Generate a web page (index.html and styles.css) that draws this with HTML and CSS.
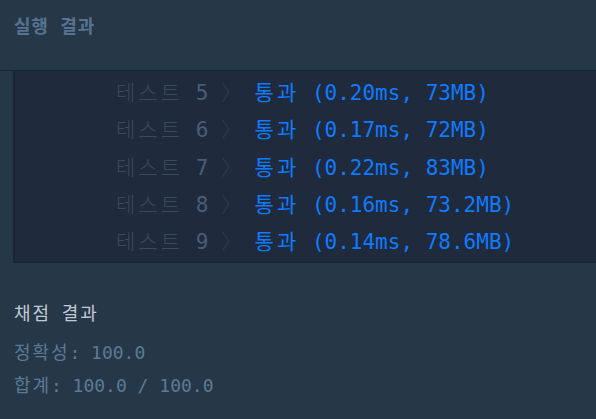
FILE: index.html
```html
<!DOCTYPE html>
<html lang="ko">
<head>
<meta charset="utf-8">
<link rel="stylesheet" href="styles.css">
</head>
<body>
<div class="header"><h2 class="title">실행 결과</h2></div>
<div class="console">
  <div class="row"><span class="label ko">테스트</span> <span class="num">5</span> <span class="arrow">〉</span> <span class="pass"><span class="ko">통과</span> (0.20ms, 73MB)</span></div>
  <div class="row"><span class="label ko">테스트</span> <span class="num">6</span> <span class="arrow">〉</span> <span class="pass"><span class="ko">통과</span> (0.17ms, 72MB)</span></div>
  <div class="row"><span class="label ko">테스트</span> <span class="num">7</span> <span class="arrow">〉</span> <span class="pass"><span class="ko">통과</span> (0.22ms, 83MB)</span></div>
  <div class="row"><span class="label ko">테스트</span> <span class="num">8</span> <span class="arrow">〉</span> <span class="pass"><span class="ko">통과</span> (0.16ms, 73.2MB)</span></div>
  <div class="row"><span class="label ko">테스트</span> <span class="num">9</span> <span class="arrow">〉</span> <span class="pass"><span class="ko">통과</span> (0.14ms, 78.6MB)</span></div>
</div>
<div class="result">
  <div class="result-title"><span class="ko">채점</span> <span class="ko">결과</span></div>
  <div class="result-line"><span class="ko">정확성</span>: 100.0</div>
  <div class="result-line"><span class="ko">합계</span>: 100.0 / 100.0</div>
</div>
</body>
</html>
```
FILE: styles.css
```css
html, body {
  margin: 0;
  padding: 0;
  background: #263747;
  overflow: hidden;
}
body {
  font-family: "DejaVu Sans Mono", "Noto Sans CJK KR", monospace;
  width: 596px;
  height: 419px;
}
.header {
  height: 71px;
  border-bottom: 1px solid #1c2735;
  padding-left: 14px;
  box-sizing: border-box;
  display: flex;
  align-items: flex-start;
}
.title {
  margin: 16px 0 0;
  font-family: "DejaVu Sans Mono", "Noto Sans CJK KR", monospace;
  font-size: 18px;
  font-weight: 700;
  line-height: 22px;
  color: #577390;
  letter-spacing: 0.8px;
}
.console {
  margin-left: 13px;
  background: #1f2a3c;
  border-left: 2px solid #1a2434;
  border-bottom: 2px solid #1a2434;
  height: 192px;
  box-sizing: border-box;
  padding-left: 101px;
  padding-top: 4px;
}
.row {
  font-size: 21px;
  line-height: 37.25px;
  white-space: pre;
}
.ko { letter-spacing: 3px; }
.label { color: #3a495d; font-weight: 300; }
.num { color: #4a5d76; }
.arrow { color: #2f3c4f; font-weight: 300; }
.pass { color: #0f7bff; }
.result {
  padding: 39px 0 0 14px;
  font-size: 18px;
}
.result .ko { letter-spacing: 1.9px; }
.result-title {
  color: #c0cbd6;
  line-height: 24px;
  white-space: pre;
}
.result-line {
  color: #5a7b96;
  line-height: 24px;
  margin-top: 15px;
  white-space: pre;
}
.result-line + .result-line {
  margin-top: 9px;
}
```
